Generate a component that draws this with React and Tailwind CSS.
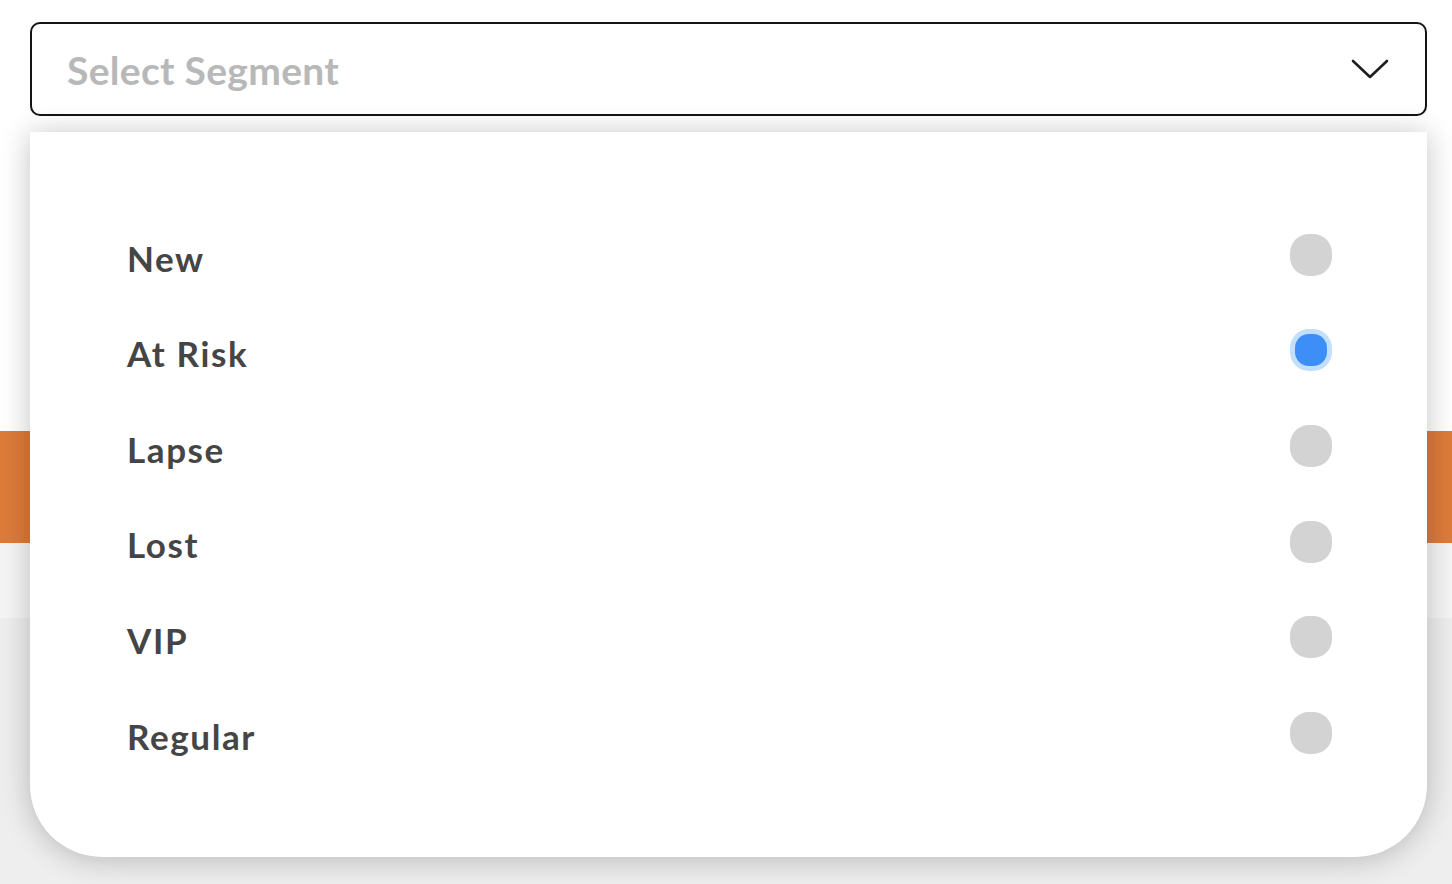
import React from "react";

const segments = ["New", "At Risk", "Lapse", "Lost", "VIP", "Regular"];

function Chevron() {
  return (
    <svg width="38" height="22" viewBox="0 0 38 22" fill="none">
      <path d="M2 3 L19 19 L36 3" stroke="#1f1f1f" strokeWidth="2.6" strokeLinecap="round" strokeLinejoin="round" />
    </svg>
  );
}

function Radio({ checked }) {
  if (checked) {
    return (
      <div className="w-[42px] h-[42px] rounded-[19px] bg-[#c2e0fd] flex items-center justify-center">
        <div className="w-[32px] h-[32px] rounded-[14px] bg-[#3d8ef6]" />
      </div>
    );
  }
  return <div className="w-[42px] h-[42px] rounded-[19px] bg-[#d3d3d3]" />;
}

export default function App() {
  const selected = "At Risk";
  return (
    <div className="relative w-full h-[884px] overflow-hidden flex flex-col" style={{ fontFamily: "Lato, 'Noto Sans', sans-serif" }}>
      {/* page behind the dropdown */}
      <div className="h-[431px] bg-white" />
      <div className="h-[112px] bg-[#de7b3a]" />
      <div className="h-[75px] bg-[#f5f5f5]" />
      <div className="flex-1 bg-[#eeeeee]" />

      {/* select control */}
      <div className="absolute left-[30px] top-[22px] w-[1397px] h-[94px] rounded-[10px] border-2 border-[#141414] bg-white flex items-center justify-between pl-[35px] pr-[36px]">
        <span className="text-[39px] font-bold text-[#b8b8b8] tracking-[0.3px] mt-[2px]">Select Segment</span>
        <Chevron />
      </div>

      {/* dropdown panel */}
      <div className="absolute left-[30px] top-[132px] w-[1397px] h-[725px] bg-white rounded-b-[72px] shadow-[0_2px_30px_rgba(0,0,0,0.24)] pt-[75px] pl-[97px] pr-[95px]">
        {segments.map((s) => (
          <div key={s} className="h-[95.6px] flex items-center justify-between">
            <span className="text-[35px] font-bold text-[#454545] tracking-[1.6px] mt-[6px]">{s}</span>
            <Radio checked={s === selected} />
          </div>
        ))}
      </div>
    </div>
  );
}
